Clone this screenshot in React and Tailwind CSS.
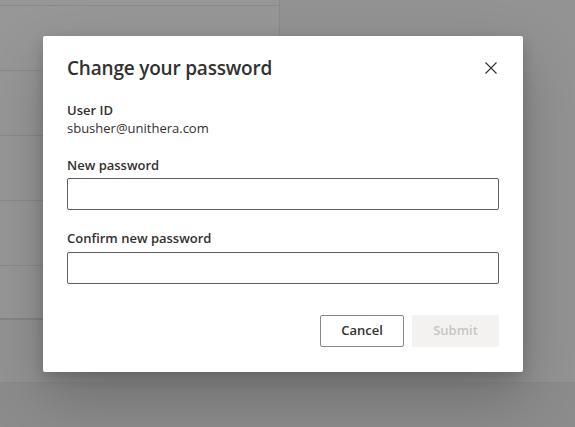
import React, { useState } from "react";

const CloseIcon = () => (
  <svg width="12" height="12" viewBox="0 0 12 12" fill="none">
    <path d="M0.5 0.5L11.5 11.5M11.5 0.5L0.5 11.5" stroke="#323130" strokeWidth="1.1" />
  </svg>
);

const Field = ({ label, value, onChange, className = "", labelClass = "" }) => (
  <div className={className}>
    <label className={`block text-[13px] leading-5 font-semibold text-[#323130] ${labelClass}`}>
      {label}
    </label>
    <input
      type="password"
      value={value}
      onChange={(e) => onChange(e.target.value)}
      className="block w-full h-8 px-2 rounded-[2px] border border-[#605e5c] bg-white text-[13px] outline-none"
    />
  </div>
);

export default function App() {
  const [newPass, setNewPass] = useState("");
  const [confirmPass, setConfirmPass] = useState("");

  return (
    <div
      className="relative w-full h-[427px] overflow-hidden bg-[#939393]"
      style={{ fontFamily: '"Segoe UI", "Open Sans", sans-serif' }}
    >
      {/* page behind the overlay */}
      <div className="flex flex-col h-full">
        <div className="flex">
          <div className="w-[280px] border-r border-[#8b8b8b] bg-[#979797]">
            <div className="h-[6px] border-b border-[#8a8a8a]" />
            <div className="h-[65px] border-b border-[#8a8a8a]" />
            <div className="h-[65px] border-b border-[#8a8a8a]" />
            <div className="h-[65px] border-b border-[#8a8a8a]" />
            <div className="h-[65px] border-b border-[#8a8a8a]" />
            <div className="h-[54px] border-b-2 border-[#858585]" />
          </div>
          <div className="flex-1" />
        </div>
        <div className="h-[62px]" />
        <div className="flex-1 border-t border-[#8a8a8a] bg-[#8c8c8c]" />
      </div>

      {/* dialog */}
      <div className="absolute left-[43px] top-[36px] w-[480px] h-[336px] bg-white rounded-[2px] shadow-[0_25px_60px_rgba(0,0,0,0.22),0_5px_14px_rgba(0,0,0,0.18)] px-6 pt-[18px]">
        <div className="flex items-center justify-between">
          <h1 className="text-[19px] leading-7 font-semibold tracking-[-0.2px] text-[#323130]">
            Change your password
          </h1>
          <button className="w-6 h-6 -mr-[4px] flex items-center justify-center">
            <CloseIcon />
          </button>
        </div>

        <div className="mt-[18px] text-[13px] leading-5 text-[#323130]">
          <div className="font-semibold">User ID</div>
          <div className="-mt-[2px]">sbusher@unithera.com</div>
        </div>

        <Field
          label="New password"
          value={newPass}
          onChange={setNewPass}
          className="mt-[10px]"
          labelClass="pt-[7px] pb-[3px]"
        />
        <Field
          label="Confirm new password"
          value={confirmPass}
          onChange={setConfirmPass}
          className="mt-3"
          labelClass="pt-[6px] pb-[4px]"
        />

        <div className="flex justify-end gap-2 mt-[31px]">
          <button className="w-[84px] h-8 rounded-[2px] border border-[#8a8886] bg-white text-[13px] font-semibold text-[#323130]">
            Cancel
          </button>
          <button
            disabled
            className="w-[87px] h-8 rounded-[2px] bg-[#f3f2f1] text-[13px] font-semibold text-[#c8c6c4]"
          >
            Submit
          </button>
        </div>
      </div>
    </div>
  );
}
